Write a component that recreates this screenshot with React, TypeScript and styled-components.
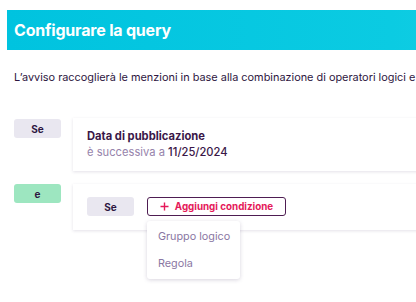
import { createGlobalStyle } from "styled-components";
import styled from "styled-components";

const GlobalStyle = createGlobalStyle`
  body {
    margin: 0;
    background: #ffffff;
    font-family: Inter, "Noto Sans", sans-serif;
  }
`;

const Viewport = styled.div`
  width: 416px;
  height: 302px;
  overflow: hidden;
`;

const Page = styled.div`
  width: 640px;
  padding: 10px 0 0 7px;
`;

const Header = styled.div`
  height: 40px;
  display: flex;
  align-items: center;
  padding-left: 7px;
  background: linear-gradient(90deg, #00c3df 0%, #0bcbe2 60%, #22d3e6 100%);
`;

const Title = styled.h1`
  margin: 0;
  font-size: 16px;
  font-weight: 700;
  color: #ffffff;
  letter-spacing: -0.2px;
`;

const Body = styled.div`
  padding: 0 0 0 7px;
`;

const Intro = styled.p`
  margin: 20px 0 0;
  font-size: 10.9px;
  line-height: 14px;
  color: #2e1641;
  white-space: nowrap;
`;

const Rules = styled.div`
  margin-top: 34px;
  display: flex;
  flex-direction: column;
  gap: 13px;
`;

const Row = styled.div`
  display: grid;
  grid-template-columns: 47px 1fr;
  column-gap: 12px;
  align-items: start;
`;

const Badge = styled.div<{ $tone?: "grey" | "green"; $offset?: number }>`
  height: 19px;
  margin-top: ${(p) => p.$offset ?? 0}px;
  border-radius: 3px;
  display: flex;
  align-items: center;
  justify-content: center;
  font-size: 10px;
  font-weight: 700;
  color: #2e1641;
  background: ${(p) => (p.$tone === "green" ? "#9de6c0" : "#e9e7f0")};
`;

const Card = styled.div<{ $height: number }>`
  position: relative;
  height: ${(p) => p.$height}px;
  box-sizing: border-box;
  background: #ffffff;
  box-shadow: 0 1px 3px rgba(60, 40, 90, 0.14);
  padding: 10px 14px;
`;

const CardTitle = styled.div`
  font-size: 11.2px;
  font-weight: 700;
  color: #3a1748;
  line-height: 16px;
`;

const CardLine = styled.div`
  font-size: 11.2px;
  line-height: 16px;
  color: #9683ab;

  strong {
    font-weight: 500;
    color: #3a1748;
  }
`;

const ActionRow = styled.div`
  display: flex;
  align-items: center;
  gap: 13px;
  margin-top: 3px;
`;

const InnerBadge = styled(Badge)`
  width: 47px;
`;

const AddWrap = styled.div`
  position: relative;
`;

const AddButton = styled.button`
  height: 19px;
  width: 139px;
  box-sizing: border-box;
  display: flex;
  align-items: center;
  justify-content: center;
  gap: 6px;
  padding: 0;
  background: #ffffff;
  border: 1px solid #4e1d52;
  border-radius: 3px;
  font-family: inherit;
  font-size: 9.8px;
  font-weight: 700;
  color: #e5195a;
`;

const Menu = styled.div`
  position: absolute;
  top: 24px;
  left: 0;
  width: 93px;
  padding: 2px 0;
  background: #ffffff;
  border-radius: 3px;
  box-shadow: 0 1px 4px rgba(60, 40, 90, 0.2);
  z-index: 2;
`;

const MenuItem = styled.div`
  padding: 0 11px;
  line-height: 27px;
  font-size: 10.8px;
  white-space: nowrap;
  color: #8a77a3;
`;

export default function App() {
  return (
    <>
      <GlobalStyle />
      <Viewport>
        <Page>
          <Header>
            <Title>Configurare la query</Title>
          </Header>
          <Body>
            <Intro>
              L’avviso raccoglierà le menzioni in base alla combinazione di operatori logici e regole
            </Intro>
            <Rules>
              <Row>
                <Badge $offset={1}>Se</Badge>
                <Card $height={53}>
                  <CardTitle>Data di pubblicazione</CardTitle>
                  <CardLine>
                    è successiva a <strong>11/25/2024</strong>
                  </CardLine>
                </Card>
              </Row>
              <Row>
                <Badge $tone="green">e</Badge>
                <Card $height={46}>
                  <ActionRow>
                    <InnerBadge>Se</InnerBadge>
                    <AddWrap>
                      <AddButton>
                        <svg width="9" height="9" viewBox="0 0 9 9">
                          <path d="M4.5 0.5v8M0.5 4.5h8" stroke="#e5195a" strokeWidth="1.4" />
                        </svg>
                        Aggiungi condizione
                      </AddButton>
                      <Menu>
                        <MenuItem>Gruppo logico</MenuItem>
                        <MenuItem>Regola</MenuItem>
                      </Menu>
                    </AddWrap>
                  </ActionRow>
                </Card>
              </Row>
            </Rules>
          </Body>
        </Page>
      </Viewport>
    </>
  );
}
